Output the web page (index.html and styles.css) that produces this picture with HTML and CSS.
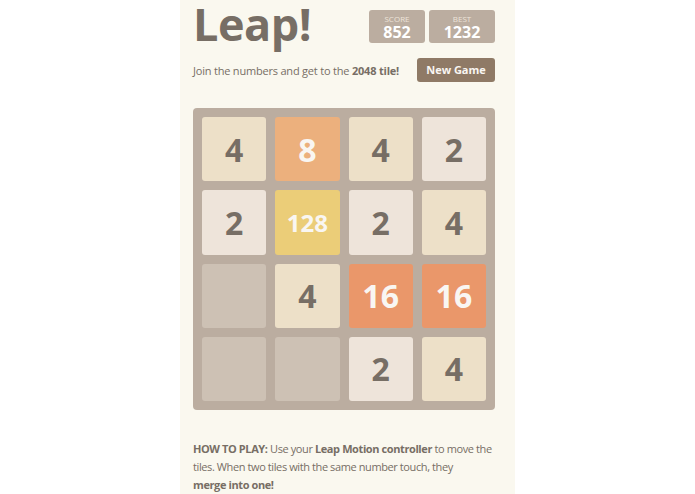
FILE: index.html
```html
<!DOCTYPE html>
<html lang="en">
<head>
    <meta charset="UTF-8">
    <meta name="viewport" content="width=device-width, initial-scale=1.0">
    <title>Leap!</title>
    <link rel="stylesheet" href="styles.css">
</head>
<body>
    <div class="container">
        <div class="heading">
            <h1 class="title">Leap!</h1>
            <div class="scores">
                <div class="score-box score">
                    <span class="score-label">SCORE</span>
                    <span class="score-value">852</span>
                </div>
                <div class="score-box best">
                    <span class="score-label">BEST</span>
                    <span class="score-value">1232</span>
                </div>
            </div>
        </div>

        <div class="above-game">
            <p class="game-intro">Join the numbers and get to the <strong>2048 tile!</strong></p>
            <a class="restart-button">New Game</a>
        </div>

        <div class="game-container">
            <div class="tile tile-4">4</div>
            <div class="tile tile-8">8</div>
            <div class="tile tile-4">4</div>
            <div class="tile tile-2">2</div>

            <div class="tile tile-2">2</div>
            <div class="tile tile-128">128</div>
            <div class="tile tile-2">2</div>
            <div class="tile tile-4">4</div>

            <div class="tile empty"></div>
            <div class="tile tile-4">4</div>
            <div class="tile tile-16">16</div>
            <div class="tile tile-16">16</div>

            <div class="tile empty"></div>
            <div class="tile empty"></div>
            <div class="tile tile-2">2</div>
            <div class="tile tile-4">4</div>
        </div>

        <p class="game-explanation">
            <strong>HOW TO PLAY:</strong> Use your <strong>Leap Motion controller</strong> to move the tiles. When two tiles with the same number touch, they<br>
            <strong>merge into one!</strong>
        </p>
    </div>
</body>
</html>
```

FILE: styles.css
```css
html, body {
    margin: 0;
    padding: 0;
    background: #ffffff;
    font-family: "Open Sans", "Noto Sans", Arial, sans-serif;
    color: #776e65;
}
.container {
    width: 302px;
    min-height: 494px;
    margin: 0 auto;
    padding: 0 20px 0 13px;
    background: #faf8ef;
    overflow: hidden;
}
.heading {
    display: flex;
    justify-content: space-between;
    align-items: flex-start;
}
.title {
    margin: 0;
    font-size: 45px;
    font-weight: 700;
    line-height: 47px;
    letter-spacing: -0.5px;
}
.scores {
    display: flex;
    gap: 4px;
    margin-top: 10px;
}
.score-box {
    display: flex;
    flex-direction: column;
    align-items: center;
    height: 33px;
    background: #bbada0;
    border-radius: 3px;
    color: #ffffff;
}
.score {
    width: 56px;
}
.best {
    width: 66px;
}
.score-label {
    margin-top: 5px;
    font-size: 8px;
    line-height: 8px;
    color: #eee4da;
}
.score-value {
    font-size: 16px;
    font-weight: 700;
    line-height: 18px;
}
.above-game {
    display: flex;
    justify-content: space-between;
    align-items: center;
    margin-top: 11px;
}
.game-intro {
    margin: 0;
    font-size: 11px;
    letter-spacing: -0.2px;
}
.restart-button {
    width: 78px;
    height: 24px;
    line-height: 24px;
    text-align: center;
    background: #8f7a66;
    border-radius: 3px;
    color: #f9f6f2;
    font-size: 11px;
    font-weight: 700;
}
.game-container {
    display: grid;
    grid-template-columns: repeat(4, 1fr);
    grid-template-rows: repeat(4, 1fr);
    gap: 9px;
    width: 284px;
    height: 284px;
    margin-top: 26px;
    padding: 9px;
    background: #bbada0;
    border-radius: 4px;
}
.tile {
    display: flex;
    align-items: center;
    justify-content: center;
    border-radius: 3px;
    font-size: 32px;
    font-weight: 700;
}
.empty {
    background: #cdc1b4;
}
.tile-2 {
    background: #eee4da;
}
.tile-4 {
    background: #ede0c8;
}
.tile-8 {
    background: #ecb07d;
    color: #f9f6f2;
}
.tile-16 {
    background: #ea976a;
    color: #f9f6f2;
}
.tile-128 {
    background: #ebcd78;
    color: #f9f6f2;
    font-size: 24px;
}
.game-explanation {
    margin: 30px 0 0;
    font-size: 11px;
    line-height: 18px;
    letter-spacing: -0.4px;
}
```
